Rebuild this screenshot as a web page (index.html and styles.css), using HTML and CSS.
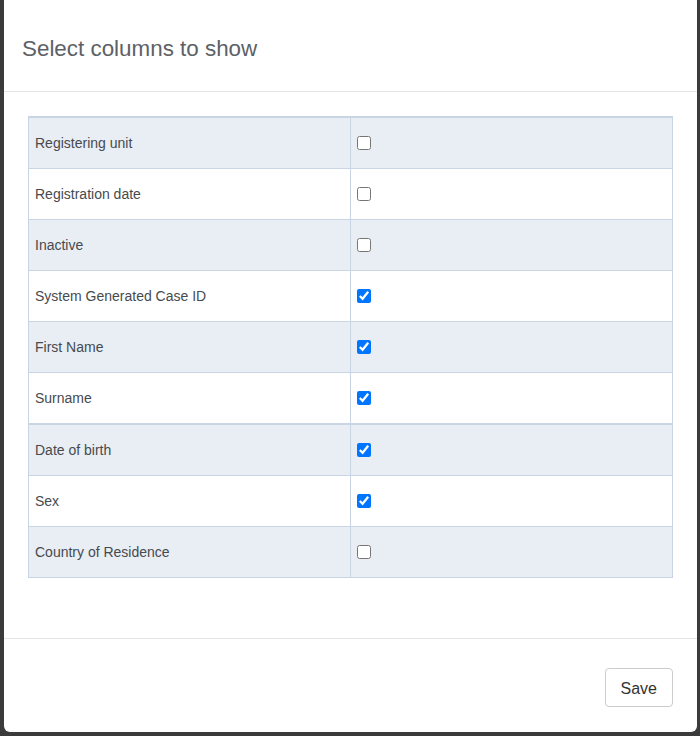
FILE: index.html
```html
<!DOCTYPE html>
<html lang="en">
<head>
<meta charset="utf-8">
<title>Select columns to show</title>
<link rel="stylesheet" href="styles.css">
</head>
<body>
<div class="modal">
  <div class="modal-header">
    <h2 class="modal-title">Select columns to show</h2>
  </div>
  <div class="modal-body">
    <div class="col-table">
      <div class="col-row"><div class="cell name">Registering unit</div><div class="cell check"><input type="checkbox"></div></div>
      <div class="col-row"><div class="cell name">Registration date</div><div class="cell check"><input type="checkbox"></div></div>
      <div class="col-row"><div class="cell name">Inactive</div><div class="cell check"><input type="checkbox"></div></div>
      <div class="col-row"><div class="cell name">System Generated Case ID</div><div class="cell check"><input type="checkbox" checked></div></div>
      <div class="col-row"><div class="cell name">First Name</div><div class="cell check"><input type="checkbox" checked></div></div>
      <div class="col-row group-end"><div class="cell name">Surname</div><div class="cell check"><input type="checkbox" checked></div></div>
      <div class="col-row"><div class="cell name">Date of birth</div><div class="cell check"><input type="checkbox" checked></div></div>
      <div class="col-row"><div class="cell name">Sex</div><div class="cell check"><input type="checkbox" checked></div></div>
      <div class="col-row"><div class="cell name">Country of Residence</div><div class="cell check"><input type="checkbox"></div></div>
    </div>
  </div>
  <div class="modal-footer">
    <button class="btn" type="button">Save</button>
  </div>
</div>
</body>
</html>
```

FILE: styles.css
```css
html, body {
  margin: 0;
  padding: 0;
}

body {
  background: #3b3b3b;
  font-family: "Liberation Sans", Arial, sans-serif;
  padding: 0 3px 4px 4px;
  overflow: hidden;
}

.modal {
  background: #ffffff;
  border-radius: 6px;
  margin-top: -6px;
}

.modal-header {
  padding: 41px 18px 29px 18px;
  border-bottom: 1px solid #e5e5e5;
}

.modal-title {
  margin: 0;
  font-size: 22.4px;
  line-height: 27px;
  font-weight: normal;
  color: #5d6166;
}

.modal-body {
  padding: 24px 24px 60px 24px;
}

.col-table {
  border-top: 2px solid #c9d5e4;
  border-left: 1px solid #c9d5e4;
}

.col-row {
  display: grid;
  grid-template-columns: 322px 1fr;
  background: #ffffff;
}

.col-row:nth-child(odd) {
  background: #e9eef5;
}

.cell {
  height: 50px;
  border-right: 1px solid #c9d5e4;
  border-bottom: 1px solid #c9d5e4;
  padding: 0 6px;
  display: flex;
  align-items: center;
}

.group-end .cell {
  border-bottom-width: 2px;
}

.name {
  font-size: 14px;
  color: #464a4e;
}

.check input {
  margin: 0;
  width: 14px;
  height: 14px;
}

.modal-footer {
  border-top: 1px solid #e5e5e5;
  padding: 29px 24px 25px 24px;
  display: flex;
  justify-content: flex-end;
}

.btn {
  font-family: "Liberation Sans", Arial, sans-serif;
  font-size: 16px;
  line-height: 25px;
  padding: 7px 15px 5px 15px;
  background: #ffffff;
  color: #333333;
  border: 1px solid #cccccc;
  border-radius: 4px;
}
```
